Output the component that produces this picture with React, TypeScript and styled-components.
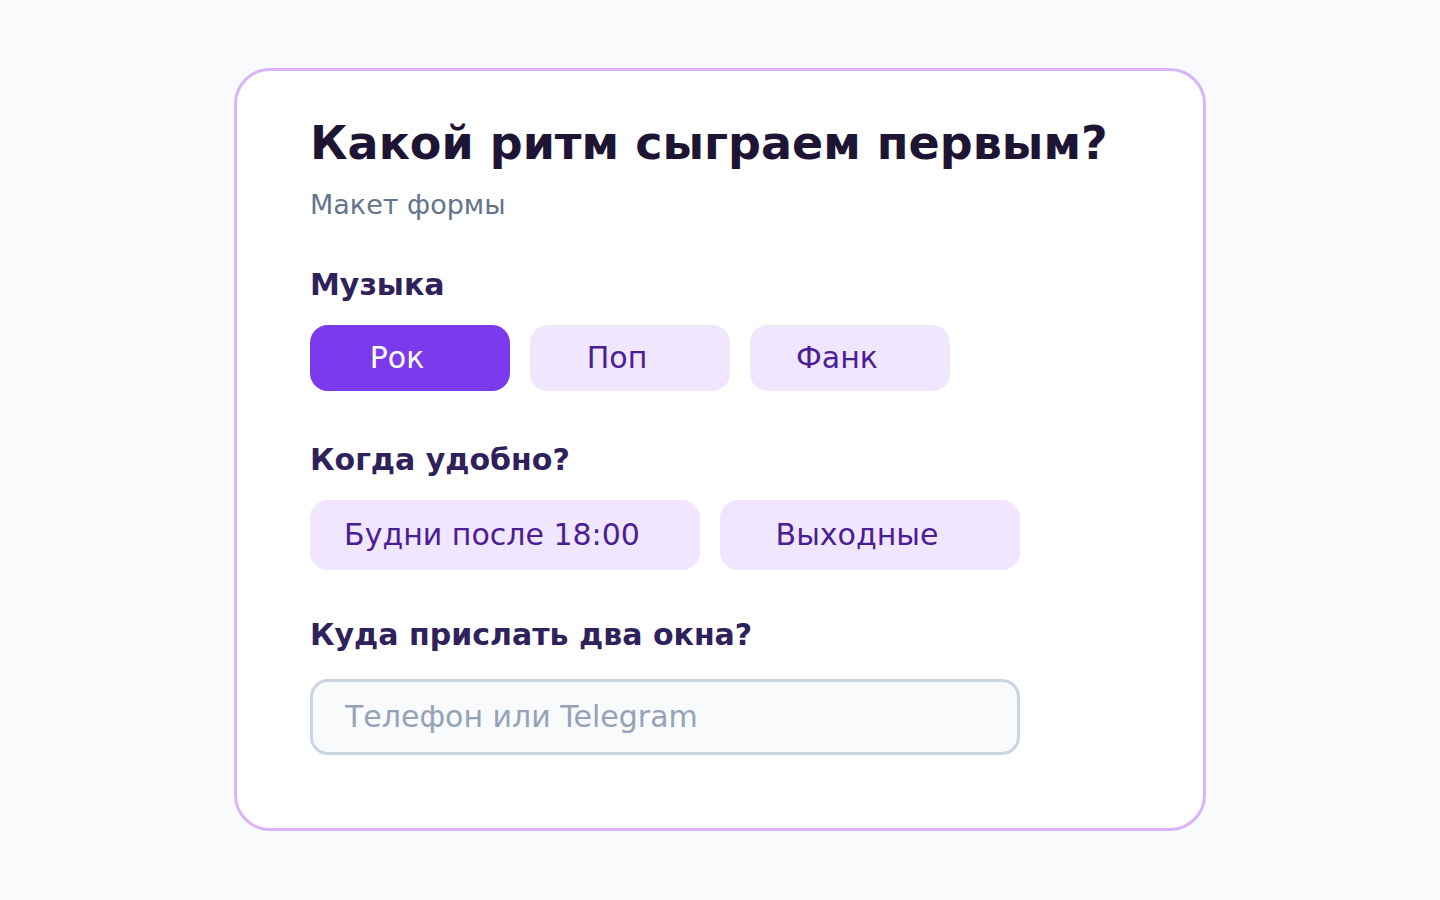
import React, { useState } from "react";
import styled, { createGlobalStyle } from "styled-components";

const GlobalStyle = createGlobalStyle`
  html, body {
    margin: 0;
    padding: 0;
    background: #f8fafc;
  }
  body {
    font-family: "DejaVu Sans", "Liberation Sans", sans-serif;
  }
`;

const Page = styled.div`
  min-height: 900px;
  display: flex;
  justify-content: center;
  padding-top: 68px;
  box-sizing: border-box;
`;

const Card = styled.div`
  box-sizing: border-box;
  width: 972px;
  height: 763px;
  background: #ffffff;
  border: 3px solid #d8b4fe;
  border-radius: 36px;
  padding: 45px 73px 0 73px;
`;

const Title = styled.h1`
  margin: 0;
  font-size: 46px;
  font-weight: 700;
  color: #1e1433;
  line-height: 1.2;
`;

const Subtitle = styled.p`
  margin: 18px 0 0;
  font-size: 27px;
  color: #64748b;
  line-height: 1.2;
`;

const Section = styled.div<{ $top: number }>`
  margin-top: ${(p) => p.$top}px;
`;

const Label = styled.div`
  font-size: 30px;
  font-weight: 700;
  color: #2f215b;
  line-height: 1.2;
`;

const Options = styled.div`
  display: flex;
  gap: 20px;
  margin-top: 22px;
`;

const Chip = styled.button<{ $active?: boolean; $width: number; $height: number }>`
  width: ${(p) => p.$width}px;
  height: ${(p) => p.$height}px;
  border: none;
  border-radius: 18px;
  padding: 0 26px 0 0;
  font-family: inherit;
  font-size: 30px;
  cursor: pointer;
  background: ${(p) => (p.$active ? "#7c3aed" : "#f0e7fe")};
  color: ${(p) => (p.$active ? "#ffffff" : "#4c1d95")};
`;

const Input = styled.input`
  box-sizing: border-box;
  width: 710px;
  height: 76px;
  margin-top: 26px;
  border: 3px solid #cbd5e1;
  border-radius: 18px;
  background: #f8fafc;
  padding: 0 32px;
  font-family: inherit;
  font-size: 30px;
  color: #1e1433;
  outline: none;

  &::placeholder {
    color: #94a3b8;
  }
`;

const genres = ["Рок", "Поп", "Фанк"];
const times = [
  { label: "Будни после 18:00", width: 390 },
  { label: "Выходные", width: 300 },
];

export default function App() {
  const [genre, setGenre] = useState("Рок");
  const [time, setTime] = useState<string | null>(null);

  return (
    <>
      <GlobalStyle />
      <Page>
        <Card>
          <Title>Какой ритм сыграем первым?</Title>
          <Subtitle>Макет формы</Subtitle>

          <Section $top={45}>
            <Label>Музыка</Label>
            <Options>
              {genres.map((g) => (
                <Chip
                  key={g}
                  $width={200}
                  $height={66}
                  $active={genre === g}
                  onClick={() => setGenre(g)}
                >
                  {g}
                </Chip>
              ))}
            </Options>
          </Section>

          <Section $top={51}>
            <Label>Когда удобно?</Label>
            <Options>
              {times.map((t) => (
                <Chip
                  key={t.label}
                  $width={t.width}
                  $height={70}
                  $active={time === t.label}
                  onClick={() => setTime(t.label)}
                >
                  {t.label}
                </Chip>
              ))}
            </Options>
          </Section>

          <Section $top={47}>
            <Label>Куда прислать два окна?</Label>
            <Input placeholder="Телефон или Telegram" />
          </Section>
        </Card>
      </Page>
    </>
  );
}
